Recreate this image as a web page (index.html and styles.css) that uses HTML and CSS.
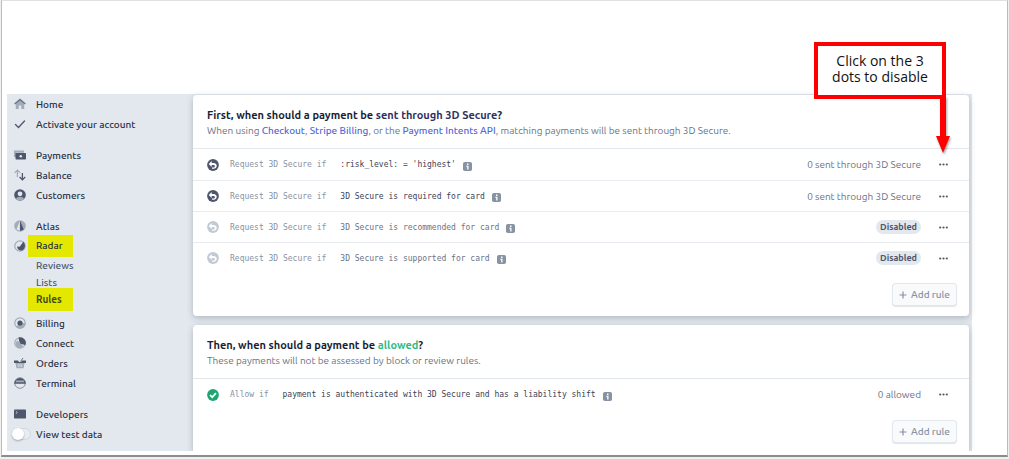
FILE: index.html
```html
<!DOCTYPE html>
<html lang="en">
<head>
  <meta charset="utf-8">
  <title>Radar rules</title>
  <link rel="stylesheet" href="styles.css">
</head>
<body>
  <div class="frame">
    <div class="app">
      <nav class="sidebar">
        <ul class="group">
          <li><a href="#"><svg class="icon" viewBox="0 0 12 12"><path fill="#a3acb9" d="M1.800 5.500L6 2l4.200 3.500V11H7.300V7.500H4.700V11H1.800z"/><path fill="#6b7386" d="M6 .6l5.800 5-.9 1L6 2.500 1.100 6.600l-.9-1z"/></svg>Home</a></li>
          <li><a href="#"><svg class="icon" viewBox="0 0 12 12"><path fill="none" stroke="#4f566b" stroke-width="1.300" stroke-linecap="round" d="M1.500 6.500l3 3 6-6.500"/></svg>Activate your account</a></li>
        </ul>
        <ul class="group">
          <li><a href="#"><svg class="icon" viewBox="0 0 12 12"><path fill="#a3acb9" d="M0 1.500h10v2.300H2V8H0z"/><rect x="1.500" y="4" width="10.500" height="6.500" rx=".8" fill="#4f566b"/><circle cx="6.800" cy="7.200" r="1.300" fill="#e3e8ee"/></svg>Payments</a></li>
          <li><a href="#"><svg class="icon" viewBox="0 0 12 12" fill="none" stroke-width="1.300"><path stroke="#a3acb9" d="M.6 3.900L3.400 1.100l2.800 2.800M3.400 1.300V8"/><path stroke="#4f566b" d="M5.600 8l2.800 2.900L11.200 8M8.400 10.800V4"/></svg>Balance</a></li>
          <li><a href="#"><svg class="icon" viewBox="0 0 12 12"><circle cx="6" cy="6" r="5.800" fill="#4f566b"/><path fill="#a3acb9" d="M2 10c.5-1.600 2-2.300 4-2.300s3.500.7 4 2.300c-2 2.300-6 2.300-8 0z"/><circle cx="6" cy="4.800" r="2.400" fill="#e3e8ee"/></svg>Customers</a></li>
        </ul>
        <ul class="group">
          <li><a href="#"><svg class="icon" viewBox="0 0 12 12"><circle cx="6" cy="6" r="5.800" fill="#a3acb9"/><path fill="#e3e8ee" d="M5.800 1L2.500 9.500l3.300 1.200z"/><path fill="#4f566b" d="M6 .8l3.800 8.800L6 11z"/></svg>Atlas</a></li>
          <li><a href="#"><svg class="icon" viewBox="0 0 12 12"><circle cx="6" cy="6" r="5.200" fill="#e3e8ee" stroke="#a3acb9" stroke-width="1.200"/><path fill="#4f566b" d="M9 1.500C12 4 11.500 8.500 8.500 10.200 5.500 11.200 3 9.500 3.200 6.300c1.300.8 2.800.5 3.200-.6C6.700 4.600 8.800 4 9 1.500z"/></svg><span class="mark">Radar</span></a>
            <ul class="sub">
              <li><a href="#">Reviews</a></li>
              <li><a href="#">Lists</a></li>
              <li><a href="#" class="current"><span class="mark mark-tall">Rules</span></a></li>
            </ul>
          </li>
          <li><a href="#"><svg class="icon" viewBox="0 0 12 12"><circle cx="6" cy="6" r="5.200" fill="#e3e8ee" stroke="#a3acb9" stroke-width="1.200"/><path fill="#a3acb9" d="M6 6h5.500A5.500 5.500 0 0 1 2 10z"/><circle cx="6" cy="6" r="2.600" fill="#4f566b"/></svg>Billing</a></li>
          <li><a href="#"><svg class="icon" viewBox="0 0 12 12"><circle cx="6" cy="6" r="5.200" fill="#e3e8ee" stroke="#a3acb9" stroke-width="1.200"/><path fill="#a3acb9" d="M3.500 3.500a4 4 0 1 0 5.500 5.500L6 6z"/><path fill="#4f566b" d="M4.800.3A5.800 5.800 0 0 1 11.500 8L7 7C5.500 6 4.600 3.500 4.800.3z"/></svg>Connect</a></li>
          <li><a href="#"><svg class="icon" viewBox="0 0 12 12"><path fill="#a3acb9" d="M1.500 6h9l-.9 5.200H2.400z"/><path stroke="#e3e8ee" d="M4.300 7v3M6 7v3M7.700 7v3" stroke-width=".7"/><path fill="#4f566b" d="M0 3.500h4L5 5h2l1-1.500h4V6H0z"/><path fill="none" stroke="#6b7386" d="M6.500 4.500L9 1"/></svg>Orders</a></li>
          <li><a href="#"><svg class="icon" viewBox="0 0 12 12"><circle cx="6" cy="6" r="5.300" fill="#e3e8ee" stroke="#8792a2"/><path fill="#4f566b" d="M.2 6.800a5.800 5.800 0 1 1 11.600 0z"/><path fill="#a3acb9" d="M2.200 3.500h7.600l.5 1.800H1.700z"/></svg>Terminal</a></li>
        </ul>
        <ul class="group">
          <li><a href="#"><svg class="icon" viewBox="0 0 12 12"><rect y="1.500" width="12" height="9" rx=".8" fill="#4f566b"/><path fill="none" stroke="#c1c9d2" stroke-width=".9" d="M1.800 3.200l1.500 1.300-1.500 1.300"/></svg>Developers</a></li>
          <li><label class="switch"><input type="checkbox">View test data</label></li>
        </ul>
      </nav>

      <main class="content">
        <section class="card">
          <header class="card-head">
            <h2>First, when should a payment be <span class="secure">sent through 3D Secure</span>?</h2>
            <p>When using <a href="#">Checkout</a>, <a href="#">Stripe Billing</a>, or the <a href="#">Payment Intents API</a>, matching payments will be sent through 3D Secure.</p>
          </header>
          <ul class="rules">
            <li class="rule">
              <svg class="icon" viewBox="0 0 12 12"><use href="#undo"/></svg>
              <span class="action">Request 3D Secure if</span>
              <span class="condition">:risk_level: = 'highest'</span>
              <svg class="info" viewBox="0 0 9 9"><use href="#info"/></svg>
              <span class="count">0 sent through 3D Secure</span>
              <button class="more" aria-label="More"><svg viewBox="0 0 9 3"><use href="#dots"/></svg></button>
            </li>
            <li class="rule">
              <svg class="icon" viewBox="0 0 12 12"><use href="#undo"/></svg>
              <span class="action">Request 3D Secure if</span>
              <span class="condition">3D Secure is required for card</span>
              <svg class="info" viewBox="0 0 9 9"><use href="#info"/></svg>
              <span class="count">0 sent through 3D Secure</span>
              <button class="more" aria-label="More"><svg viewBox="0 0 9 3"><use href="#dots"/></svg></button>
            </li>
            <li class="rule off">
              <svg class="icon" viewBox="0 0 12 12"><use href="#undo"/></svg>
              <span class="action">Request 3D Secure if</span>
              <span class="condition">3D Secure is recommended for card</span>
              <svg class="info" viewBox="0 0 9 9"><use href="#info"/></svg>
              <span class="badge">Disabled</span>
              <button class="more" aria-label="More"><svg viewBox="0 0 9 3"><use href="#dots"/></svg></button>
            </li>
            <li class="rule off">
              <svg class="icon" viewBox="0 0 12 12"><use href="#undo"/></svg>
              <span class="action">Request 3D Secure if</span>
              <span class="condition">3D Secure is supported for card</span>
              <svg class="info" viewBox="0 0 9 9"><use href="#info"/></svg>
              <span class="badge">Disabled</span>
              <button class="more" aria-label="More"><svg viewBox="0 0 9 3"><use href="#dots"/></svg></button>
            </li>
          </ul>
          <footer class="card-foot">
            <button class="add"><svg viewBox="0 0 8 8"><use href="#plus"/></svg>Add rule</button>
          </footer>
        </section>

        <section class="card card-last">
          <header class="card-head">
            <h2>Then, when should a payment be <span class="allowed">allowed</span>?</h2>
            <p>These payments will not be assessed by block or review rules.</p>
          </header>
          <ul class="rules">
            <li class="rule">
              <svg class="icon" viewBox="0 0 12 12"><circle cx="6" cy="6" r="5.900" fill="#1ea672"/><path fill="none" stroke="#fff" stroke-width="1.700" d="M3 6l2.200 2.200L9 4.200"/></svg>
              <span class="action">Allow if</span>
              <span class="condition">payment is authenticated with 3D Secure and has a liability shift</span>
              <svg class="info" viewBox="0 0 9 9"><use href="#info"/></svg>
              <span class="count">0 allowed</span>
              <button class="more" aria-label="More"><svg viewBox="0 0 9 3"><use href="#dots"/></svg></button>
            </li>
          </ul>
          <footer class="card-foot">
            <button class="add"><svg viewBox="0 0 8 8"><use href="#plus"/></svg>Add rule</button>
          </footer>
        </section>
      </main>
    </div>

    <div class="callout">
      <p>Click on the 3<br>dots to disable</p>
      <svg class="arrow" viewBox="0 0 14 58"><path fill="#fe0000" d="M4 0h6v40h4L7 57 0 40h4z"/></svg>
    </div>
  </div>

  <svg class="defs">
    <symbol id="undo" viewBox="0 0 12 12"><circle cx="6" cy="6" r="5.900" fill="currentColor"/><path fill="#fff" d="M1.700 5l3-2.900v2h1.800c4.300 0 4.300 5.700 0 5.700H5V8.400h1.400c2 0 2-2.500 0-2.500H4.700v2z"/></symbol>
    <symbol id="info" viewBox="0 0 9 9"><rect width="9" height="9" rx="1.800" fill="#8792a2"/><path fill="#fff" d="M4 1.600h1.500V3H4zM3.300 3.700h2.200v3.700H4.200V4.800h-.9z"/></symbol>
    <symbol id="dots" viewBox="0 0 9 3"><g fill="#4f566b"><circle cx="1.200" cy="1.500" r="1.100"/><circle cx="4.500" cy="1.500" r="1.100"/><circle cx="7.800" cy="1.500" r="1.100"/></g></symbol>
    <symbol id="plus" viewBox="0 0 8 8"><path stroke="#8792a2" stroke-width="1.200" d="M4 .5v7M.5 4h7"/></symbol>
  </svg>
</body>
</html>
```
FILE: styles.css
```css
* { box-sizing: border-box; }
body {
  margin: 0;
  font-family: Ubuntu, "Noto Sans", sans-serif;
  font-size: 10px;
  line-height: 15px;
  color: #2a2f45;
  background: #f0f0f0;
}
ul { list-style: none; margin: 0; padding: 0; }
a { text-decoration: none; color: inherit; }
button { font: inherit; cursor: pointer; }
.defs { display: none; }

.frame {
  position: relative;
  margin: 0 1px 2px;
  padding: 93px 35px 4px 5px;
  min-height: calc(100vh - 2px);
  background: #fff;
  border: 1px solid #bbb;
  border-top-color: #e0e0e0;
  border-bottom: 2px solid #8c8c8c;
}
.app { display: flex; background: #e3e8ee; }

/* sidebar */
.sidebar {
  flex: none;
  width: 186px;
  color: #2a2f45;
  font-weight: 500;
}
.group + .group { margin-top: 11px; }
.group a, .switch {
  display: flex;
  align-items: center;
  gap: 10px;
  height: 20px;
  padding-left: 7px;
}
.icon { flex: none; width: 12px; height: 12px; }
.sub { padding: 1px 0 5px; }
.sub a { height: 17px; padding-left: 29px; color: #4f566b; }
.sub .current { font-weight: 700; color: #3c4257; }
.mark {
  margin-left: -8px;
  padding: 3px 10px 4px 8px;
  background: #e4e800;
}
.mark-tall { padding: 4px 11px 4px 8px; color: #464c10; }
.switch { padding-left: 5px; gap: 5px; }
.switch input {
  appearance: none;
  width: 19px;
  height: 12px;
  margin: 0;
  border-radius: 6px;
  background: #e9edf2;
  box-shadow: inset 0 0 0 1px #d2d8e0;
}
.switch input::before {
  content: "";
  display: block;
  width: 12px;
  height: 12px;
  border-radius: 50%;
  background: #fff;
  box-shadow: 0 1px 2px rgba(60, 66, 87, 0.4);
}

/* cards */
.content { flex: 1; padding: 1px 3px 0 0; min-width: 0; }
.card {
  background: #fff;
  border-radius: 4px;
  box-shadow: 0 2px 6px rgba(60, 66, 87, 0.3);
}
.card + .card { margin-top: 9px; }
.card-last { border-radius: 4px 4px 0 0; clip-path: inset(-6px -6px 0 -6px); }
.card-head { padding: 13px 14px 10px; border-bottom: 1px solid #e3e8ee; }
.card-head h2 {
  margin: 0;
  font-size: 11px;
  line-height: 15px;
  font-weight: 600;
  color: #1a1f36;
}
.card-head p { margin: 0; color: #697386; }
.card-head p a { color: #5469d4; font-weight: 500; }
.secure { color: #2f3060; }
.allowed { color: #33b985; }

.rule {
  display: flex;
  align-items: center;
  height: 31px;
  padding: 0 18px 0 14px;
  color: #4f566b;
}
.rule + .rule { border-top: 1px solid #e8ecf1; }
.action, .condition {
  font-family: "DejaVu Sans Mono", monospace;
  font-size: 8px;
  white-space: nowrap;
}
.action { margin: 0 14px 0 11px; color: #8792a2; }
.condition { color: #3c4257; }
.info { flex: none; width: 9px; height: 9px; margin: 3px 0 0 7px; }
.off .icon { color: #c1c9d2; }
.off .condition { color: #697386; }
.count, .badge { margin-left: auto; }
.count { color: #697386; }
.badge {
  padding: 0 4px;
  border-radius: 7px;
  line-height: 14px;
  font-size: 9px;
  font-weight: 600;
  color: #4f566b;
  background: #e3e8ee;
}
.more {
  display: flex;
  padding: 4px 3px;
  margin-left: 15px;
  border: 0;
  background: none;
}
.more svg { width: 9px; height: 3px; }

.card-foot { display: flex; justify-content: flex-end; padding: 11px 13px; }
.card-last .card-foot { padding-bottom: 9px; }
.add {
  display: flex;
  align-items: center;
  gap: 4px;
  height: 21px;
  padding: 0 6px;
  border: 0;
  border-radius: 3px;
  color: #8792a2;
  background: #f9fafc;
  font-weight: 500;
  box-shadow: 0 0 0 1px #e3e8ee, 0 1px 1px 1px rgba(60, 66, 87, 0.15);
}
.add svg { width: 8px; height: 8px; }

/* note over the page */
.callout {
  position: absolute;
  top: 41px;
  right: 61px;
  width: 132px;
  height: 57px;
  padding: 7px 0;
  border: 4px solid #fe0000;
  background: #fff;
  color: #111;
  font-family: "Open Sans", sans-serif;
  font-size: 14px;
  line-height: 16px;
  text-align: center;
}
.callout p { margin: 0; }
.arrow {
  position: absolute;
  top: 50px;
  right: -8px;
  width: 14px;
  height: 58px;
  filter: drop-shadow(1px 2px 1px rgba(0, 0, 0, 0.35));
}
```
